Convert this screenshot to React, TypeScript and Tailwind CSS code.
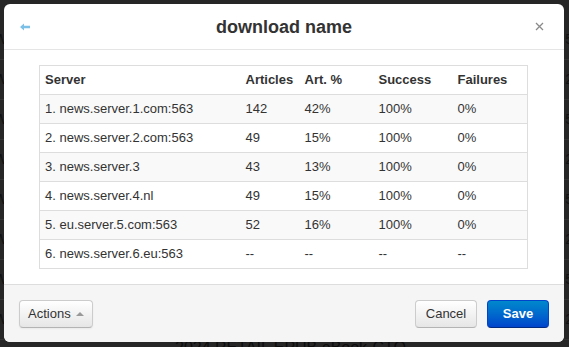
import React from 'react';

type Row = {
  server: string;
  articles: string;
  pct: string;
  success: string;
  failures: string;
};

const rows: Row[] = [
  { server: '1. news.server.1.com:563', articles: '142', pct: '42%', success: '100%', failures: '0%' },
  { server: '2. news.server.2.com:563', articles: '49', pct: '15%', success: '100%', failures: '0%' },
  { server: '3. news.server.3', articles: '43', pct: '13%', success: '100%', failures: '0%' },
  { server: '4. news.server.4.nl', articles: '49', pct: '15%', success: '100%', failures: '0%' },
  { server: '5. eu.server.5.com:563', articles: '52', pct: '16%', success: '100%', failures: '0%' },
  { server: '6. news.server.6.eu:563', articles: '--', pct: '--', success: '--', failures: '--' },
];

// faint page content visible around the dialog
const bgRows = ['W', 'W', 'W', 'W', 'W', 'W', 'W', 'W', 'W'];

export default function App() {
  return (
    <div className="relative h-[347px] w-full overflow-hidden bg-[#262626] font-['Liberation_Sans',Arial,sans-serif] text-[#333]">
      {/* Background page */}
      <div className="flex flex-col pt-[20px]">
        {bgRows.map((w, i) => (
          <div key={i} className="flex h-[40px] items-center justify-between border-b border-[#333] px-0 text-[14px] text-[#111]">
            <span className="-ml-[6px]">{w}</span>
            <span className="-mr-[4px]">{i % 2 ? '2' : '5'}</span>
          </div>
        ))}
      </div>
      <div className="absolute left-[175px] top-[336px] text-[16px] text-[#0d0d0d]">2024 RETAIL EPUB eBook-CTO</div>

      {/* Dialog */}
      <div className="absolute left-[4px] top-[4px] flex h-[338px] w-[560px] flex-col overflow-hidden rounded-[6px] bg-white">
        <div className="flex h-[46px] shrink-0 items-center border-b border-[#e5e5e5] px-[15px]">
          <span className="flex w-[40px] items-center pl-[1px]">
            <svg width="10" height="8" viewBox="0 0 10 8" fill="#7cc0e8">
              <path d="M0 4 L4 0.5 L4 2.8 L10 2.8 L10 5.2 L4 5.2 L4 7.5 Z" />
            </svg>
          </span>
          <h3 className="flex-1 text-center text-[18px] font-bold leading-none text-[#333]">download name</h3>
          <span className="flex w-[40px] justify-end pr-[5px]">
            <svg width="9" height="9" viewBox="0 0 9 9" stroke="#8a8a8a" strokeWidth="1.3">
              <path d="M1 1 L8 8 M8 1 L1 8" />
            </svg>
          </span>
        </div>

        <div className="flex-1 px-[35px] pt-[15px]">
          <table className="w-[489px] table-fixed border-collapse border border-[#ddd] text-[13px] text-[#333]">
            <thead>
              <tr className="h-[29px]">
                <th className="w-[201px] px-[5px] text-left font-bold">Server</th>
                <th className="w-[59px] px-[5px] text-left font-bold">Articles</th>
                <th className="w-[74px] px-[5px] text-left font-bold">Art. %</th>
                <th className="w-[79px] px-[5px] text-left font-bold">Success</th>
                <th className="px-[5px] text-left font-bold">Failures</th>
              </tr>
            </thead>
            <tbody>
              {rows.map((r, i) => (
                <tr key={r.server} className={`h-[29px] border-t border-[#ddd] ${i % 2 === 0 ? 'bg-[#f9f9f9]' : 'bg-white'}`}>
                  <td className="px-[5px]">{r.server}</td>
                  <td className="px-[5px]">{r.articles}</td>
                  <td className="px-[5px]">{r.pct}</td>
                  <td className="px-[5px]">{r.success}</td>
                  <td className="px-[5px]">{r.failures}</td>
                </tr>
              ))}
            </tbody>
          </table>
        </div>

        <div className="flex h-[58px] shrink-0 items-center justify-between border-t border-[#ddd] bg-[#f5f5f5] px-[15px]">
          <button className="flex h-[28px] items-center gap-[5px] rounded-[4px] border border-[#ccc] border-b-[#b3b3b3] bg-gradient-to-b from-white to-[#e6e6e6] px-[8px] text-[13px] text-[#333] shadow-[inset_0_1px_0_rgba(255,255,255,0.2),0_1px_2px_rgba(0,0,0,0.05)]">
            Actions
            <span className="h-0 w-0 border-x-[4px] border-b-[4px] border-x-transparent border-b-[#999]" />
          </button>
          <div className="flex gap-[10px]">
            <button className="h-[28px] w-[62px] rounded-[4px] border border-[#ccc] border-b-[#b3b3b3] bg-gradient-to-b from-white to-[#e6e6e6] text-[13px] text-[#333]">
              Cancel
            </button>
            <button className="h-[28px] w-[62px] rounded-[4px] border border-[#04c] border-b-[#002a80] bg-gradient-to-b from-[#08c] to-[#04c] text-[13px] font-bold text-white">
              Save
            </button>
          </div>
        </div>
      </div>
    </div>
  );
}
